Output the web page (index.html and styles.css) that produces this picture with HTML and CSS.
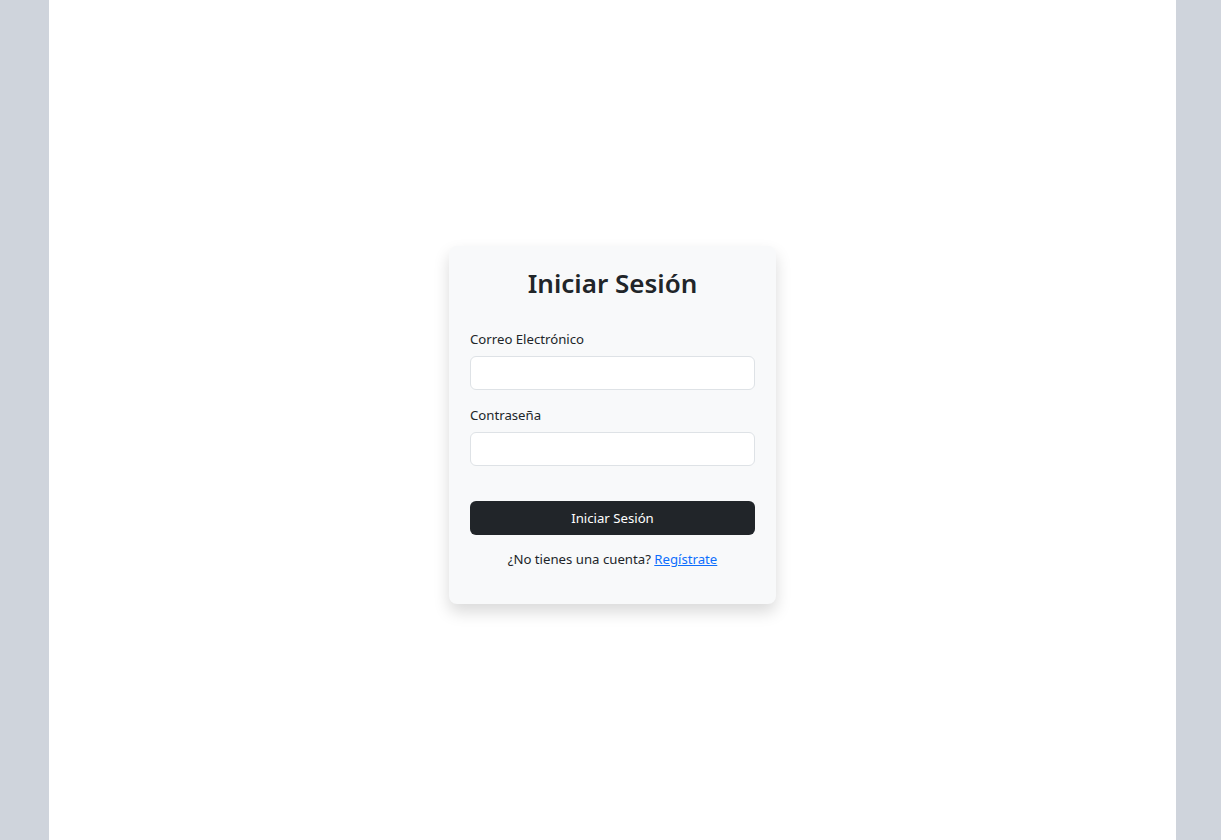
FILE: index.html
```html
<!DOCTYPE html>
<html lang="es">
<head>
<meta charset="utf-8">
<title>Iniciar Sesión</title>
<link rel="stylesheet" href="styles.css">
</head>
<body>
<div class="page">
  <main class="content">
    <form class="card">
      <h3 class="title">Iniciar Sesión</h3>
      <div class="field">
        <label class="label" for="email">Correo Electrónico</label>
        <input class="input" id="email" type="email">
      </div>
      <div class="field">
        <label class="label" for="pass">Contraseña</label>
        <input class="input" id="pass" type="password">
      </div>
      <button class="btn" type="button">Iniciar Sesión</button>
      <p class="signup">¿No tienes una cuenta? <a href="#" class="link">Regístrate</a></p>
    </form>
  </main>
</div>
</body>
</html>
```

FILE: styles.css
```css
* { box-sizing: border-box; }
html, body { margin: 0; padding: 0; height: 100%; }
body {
  font-family: "Noto Sans", "Open Sans", sans-serif;
  color: #212529;
  background: #cfd4dc;
  font-size: 13.2px;
}
.page {
  height: 840px;
  padding: 0 45px 0 49px;
  display: flex;
}
.content {
  flex: 1;
  background: #fff;
  display: flex;
  align-items: center;
  justify-content: center;
  padding-top: 10px;
}
.card {
  width: 327px;
  background: #f8f9fa;
  border-radius: 8px;
  box-shadow: 0 8px 16px rgba(0,0,0,0.15);
  padding: 22px 21px 21px;
  display: flex;
  flex-direction: column;
}
.title {
  margin: 0 0 30px;
  font-size: 26px;
  font-weight: 600;
  line-height: 1.2;
  text-align: center;
}
.field { display: flex; flex-direction: column; margin-bottom: 15px; }
.label { line-height: 21px; margin-bottom: 6px; }
.input {
  height: 34px;
  border: 1px solid #dee2e6;
  border-radius: 6px;
  background: #fff;
  font: inherit;
  padding: 4px 12px;
}
.btn {
  margin-top: 20px;
  height: 34px;
  border: 0;
  border-radius: 6px;
  background: #212529;
  color: #fff;
  font: inherit;
  cursor: pointer;
}
.signup {
  margin: 14px 0 13px;
  text-align: center;
  line-height: 21px;
}
.link { color: #0d6efd; }
```
